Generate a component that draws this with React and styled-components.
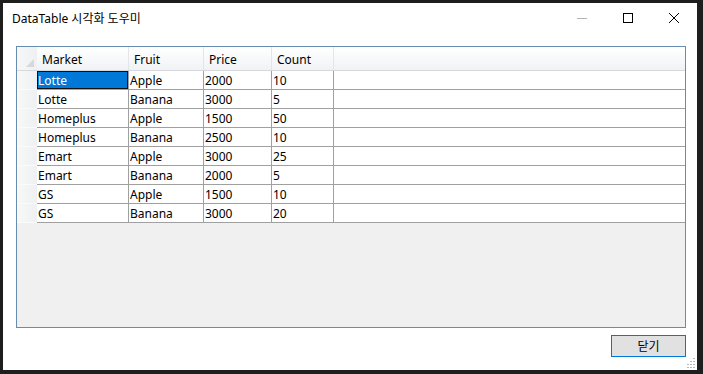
import React from "react";
import styled, { createGlobalStyle } from "styled-components";

const GlobalStyle = createGlobalStyle`
  html, body {
    margin: 0;
    padding: 0;
    background: #1e1e1e;
  }
  body {
    font-family: "Noto Sans", "Noto Sans CJK KR", sans-serif;
    font-size: 12px;
  }
`;

const FONT = `"Noto Sans", "Noto Sans CJK KR", sans-serif`;

const Screen = styled.div`
  width: 703px;
  height: 374px;
  box-sizing: border-box;
  padding: 3px 6px 4px 3px;
  display: flex;
  background: #1e1e1e;
`;

const Window = styled.div`
  flex: 1;
  display: flex;
  flex-direction: column;
  background: #ffffff;
  position: relative;
`;

const TitleBar = styled.div`
  height: 30px;
  display: flex;
  flex-direction: row;
  align-items: center;
`;

const Title = styled.div`
  flex: 1;
  padding-left: 9px;
  font-family: ${FONT};
  font-size: 12px;
  color: #000;
`;

const CaptionButton = styled.div`
  width: 46px;
  height: 30px;
  display: flex;
  align-items: center;
  justify-content: center;
`;

const Body = styled.div`
  flex: 1;
  display: flex;
  flex-direction: column;
  padding: 13px 11px 0 13px;
`;

const Grid = styled.div`
  height: 282px;
  box-sizing: border-box;
  border: 1px solid #688caf;
  background: #f0f0f0;
  display: flex;
  flex-direction: column;
`;

const HeaderRow = styled.div`
  height: 24px;
  box-sizing: border-box;
  display: flex;
  flex-direction: row;
  border-bottom: 1px solid #d5d9de;
  background: linear-gradient(to bottom, #ffffff 0%, #f9fafb 40%, #f1f2f4 100%);
`;

const Corner = styled.div`
  width: 20px;
  position: relative;
  background: linear-gradient(to right, #f7f7f7, #eef0f2);
`;

const HeaderCell = styled.div`
  width: ${(p) => (p.$w ? `${p.$w}px` : "auto")};
  flex: ${(p) => (p.$w ? "none" : "1")};
  box-sizing: border-box;
  border-right: ${(p) => (p.$w ? "1px solid #e3e5e8" : "none")};
  padding: 1px 0 0 5px;
  display: flex;
  align-items: center;
  font-family: ${FONT};
  font-size: 12px;
  color: #000;
`;

const Rows = styled.div`
  display: flex;
  flex-direction: column;
  background: #ffffff;
`;

const Row = styled.div`
  height: 19px;
  display: flex;
  flex-direction: row;
`;

const RowHeader = styled.div`
  width: 20px;
  box-sizing: border-box;
  background: linear-gradient(to right, #f8f8f8, #eef0f2);
  border-bottom: 1px solid #fbfbfb;
`;

const Cell = styled.div`
  width: ${(p) => (p.$w ? `${p.$w}px` : "auto")};
  flex: ${(p) => (p.$w ? "none" : "1")};
  box-sizing: border-box;
  border-right: ${(p) => (p.$w ? "1px solid #a0a0a0" : "none")};
  border-bottom: 1px solid #a0a0a0;
  padding: 0 0 0 1px;
  display: flex;
  align-items: center;
  font-family: ${FONT};
  font-size: 12px;
  white-space: nowrap;
  color: ${(p) => (p.$selected ? "#ffffff" : "#000000")};
  background: ${(p) => (p.$selected ? "#0078d7" : "transparent")};
  box-shadow: ${(p) => (p.$selected ? "inset 0 0 0 1px #111111" : "none")};
`;

const Footer = styled.div`
  display: flex;
  flex-direction: row;
  justify-content: flex-end;
  padding-top: 7px;
`;

const Button = styled.div`
  width: 75px;
  height: 22px;
  box-sizing: border-box;
  border: 1px solid #0078d7;
  background: #e1e1e1;
  display: flex;
  align-items: center;
  justify-content: center;
  font-family: ${FONT};
  font-size: 12px;
  color: #000;
`;

const Grip = styled.svg`
  position: absolute;
  right: 1px;
  bottom: 2px;
`;

const columns = [
  { key: "Market", w: 92 },
  { key: "Fruit", w: 75 },
  { key: "Price", w: 68 },
  { key: "Count", w: 62 },
];

const data = [
  ["Lotte", "Apple", "2000", "10"],
  ["Lotte", "Banana", "3000", "5"],
  ["Homeplus", "Apple", "1500", "50"],
  ["Homeplus", "Banana", "2500", "10"],
  ["Emart", "Apple", "3000", "25"],
  ["Emart", "Banana", "2000", "5"],
  ["GS", "Apple", "1500", "10"],
  ["GS", "Banana", "3000", "20"],
];

function App() {
  return (
    <>
      <GlobalStyle />
      <Screen>
        <Window>
          <TitleBar>
            <Title>DataTable 시각화 도우미</Title>
            <CaptionButton>
              <svg width="10" height="10" viewBox="0 0 10 10">
                <line x1="0" y1="5.5" x2="10" y2="5.5" stroke="#b4b4b4" strokeWidth="1" />
              </svg>
            </CaptionButton>
            <CaptionButton>
              <svg width="10" height="10" viewBox="0 0 10 10">
                <rect x="0.5" y="0.5" width="9" height="9" fill="none" stroke="#000" strokeWidth="1" />
              </svg>
            </CaptionButton>
            <CaptionButton>
              <svg width="10" height="10" viewBox="0 0 10 10">
                <path d="M0 0 L10 10 M10 0 L0 10" stroke="#000" strokeWidth="1" />
              </svg>
            </CaptionButton>
          </TitleBar>
          <Body>
            <Grid>
              <HeaderRow>
                <Corner>
                  <svg
                    width="8"
                    height="8"
                    viewBox="0 0 8 8"
                    style={{ position: "absolute", right: 3, bottom: 3 }}
                  >
                    <polygon points="8,0 8,8 0,8" fill="#d6d8db" />
                  </svg>
                </Corner>
                {columns.map((c) => (
                  <HeaderCell key={c.key} $w={c.w}>
                    {c.key}
                  </HeaderCell>
                ))}
                <HeaderCell />
              </HeaderRow>
              <Rows>
                {data.map((row, i) => (
                  <Row key={i}>
                    <RowHeader />
                    {row.map((v, j) => (
                      <Cell key={j} $w={columns[j].w} $selected={i === 0 && j === 0}>
                        {v}
                      </Cell>
                    ))}
                    <Cell />
                  </Row>
                ))}
              </Rows>
            </Grid>
            <Footer>
              <Button>닫기</Button>
            </Footer>
          </Body>
          <Grip width="10" height="10" viewBox="0 0 10 10">
            {[
              [8, 0],
              [8, 3],
              [5, 3],
              [8, 6],
              [5, 6],
              [2, 6],
              [8, 9],
              [5, 9],
              [2, 9],
            ].map(([x, y], k) => (
              <rect key={k} x={x - 1} y={y} width="2" height="1" fill="#b8b8b8" />
            ))}
          </Grip>
        </Window>
      </Screen>
    </>
  );
}

export default App;
